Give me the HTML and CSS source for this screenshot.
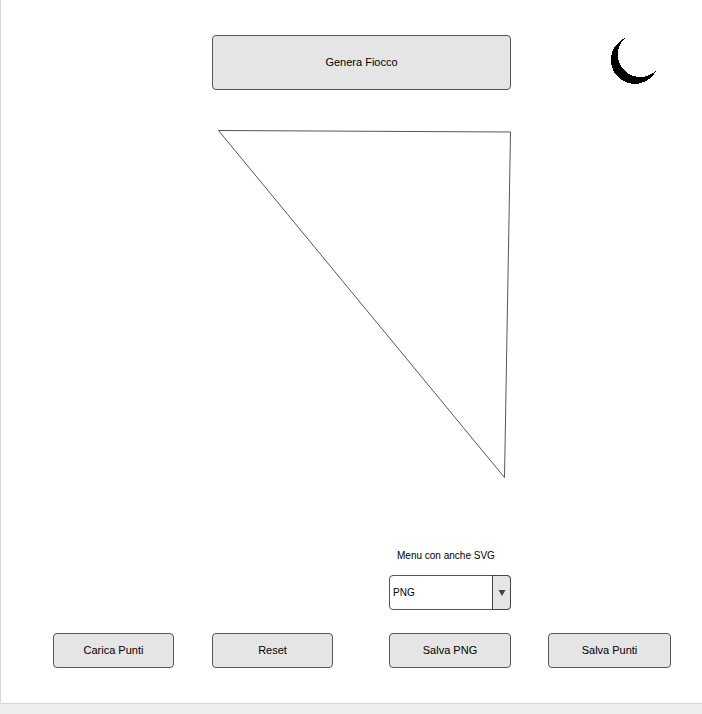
FILE: index.html
```html
<!DOCTYPE html>
<html lang="it">
<head>
<meta charset="utf-8">
<meta name="viewport" content="width=device-width, initial-scale=1">
<title>Genera Fiocco</title>
<link rel="stylesheet" href="styles.css">
</head>
<body>
<main class="panel">
  <button class="btn generate" type="button">Genera Fiocco</button>
  <button class="theme" type="button" aria-label="Tema scuro">
    <svg class="moon" viewBox="0 0 48 48" aria-hidden="true" shape-rendering="crispEdges">
      <path d="M16 1A24 24 0 1 0 47.500 33.200A22.530 22.530 0 1 1 16 1Z"/>
    </svg>
  </button>

  <svg class="canvas" viewBox="0 0 299 350" role="img" aria-label="Triangolo">
    <polygon points="6.500,0.500 298.500,2 292.500,347.500"/>
  </svg>

  <div class="format">
    <label class="format-label" for="format">Menu con anche SVG</label>
    <div class="select">
      <select id="format">
        <option>PNG</option>
        <option>SVG</option>
      </select>
      <span class="arrow"><svg viewBox="0 0 8 6" aria-hidden="true"><path d="M0.500 0H7.500L4 6Z"/></svg></span>
    </div>
  </div>

  <button class="btn load" type="button">Carica Punti</button>
  <button class="btn reset" type="button">Reset</button>
  <button class="btn save-image" type="button">Salva PNG</button>
  <button class="btn save-points" type="button">Salva Punti</button>
</main>
</body>
</html>
```
FILE: styles.css
```css
* {
  box-sizing: border-box;
}

body {
  margin: 0;
  background: #ededed;
  color: #000;
  font-family: "Liberation Sans", Arial, sans-serif;
  font-size: 11px;
}

.panel {
  display: grid;
  grid-template-columns: 121fr 38fr 121fr 56fr 122fr 37fr 123fr;
  padding: 35px 31px 35px 52px;
  border-left: 1px solid #d8d8d8;
  border-bottom: 1px solid #d8d8d8;
  background: #fff;
}

.btn {
  height: 35px;
  padding: 0 0 2px;
  border: 1px solid #555;
  border-radius: 4px;
  background: #e5e5e5;
  color: inherit;
  font: inherit;
}

.generate {
  grid-area: 1 / 3 / 2 / 6;
  height: 55px;
}

.theme {
  grid-area: 1 / 7;
  justify-self: end;
  align-self: start;
  margin: 2px 14px 0 0;
  padding: 0;
  border: 0;
  background: none;
}

.moon {
  display: block;
  width: 48px;
  height: 48px;
}

.canvas {
  grid-area: 2 / 3 / 3 / 6;
  display: block;
  width: 100%;
  margin-top: 40px;
  overflow: visible;
}

.canvas polygon {
  fill: #fff;
  stroke: #555;
}

.format {
  grid-area: 3 / 5;
  margin: 68px 0 23px;
  font-size: 10px;
}

.format-label {
  display: block;
  margin: 0 0 11px 8px;
  line-height: 16px;
  white-space: nowrap;
}

.select {
  position: relative;
}

.select select {
  display: block;
  width: 100%;
  height: 35px;
  padding: 0 20px 0 3px;
  border: 1px solid #555;
  border-radius: 4px;
  appearance: none;
  background: #fff;
  color: inherit;
  font: inherit;
}

.arrow {
  position: absolute;
  top: 0;
  right: 0;
  bottom: 0;
  display: flex;
  align-items: center;
  justify-content: center;
  width: 19px;
  border: 1px solid #444;
  border-radius: 0 4px 4px 0;
  background: #e5e5e5;
  pointer-events: none;
}

.arrow svg {
  width: 8px;
  height: 6px;
  fill: #444;
}

.load {
  grid-area: 4 / 1;
}

.reset {
  grid-area: 4 / 3;
}

.save-image {
  grid-area: 4 / 5;
}

.save-points {
  grid-area: 4 / 7;
}
```
